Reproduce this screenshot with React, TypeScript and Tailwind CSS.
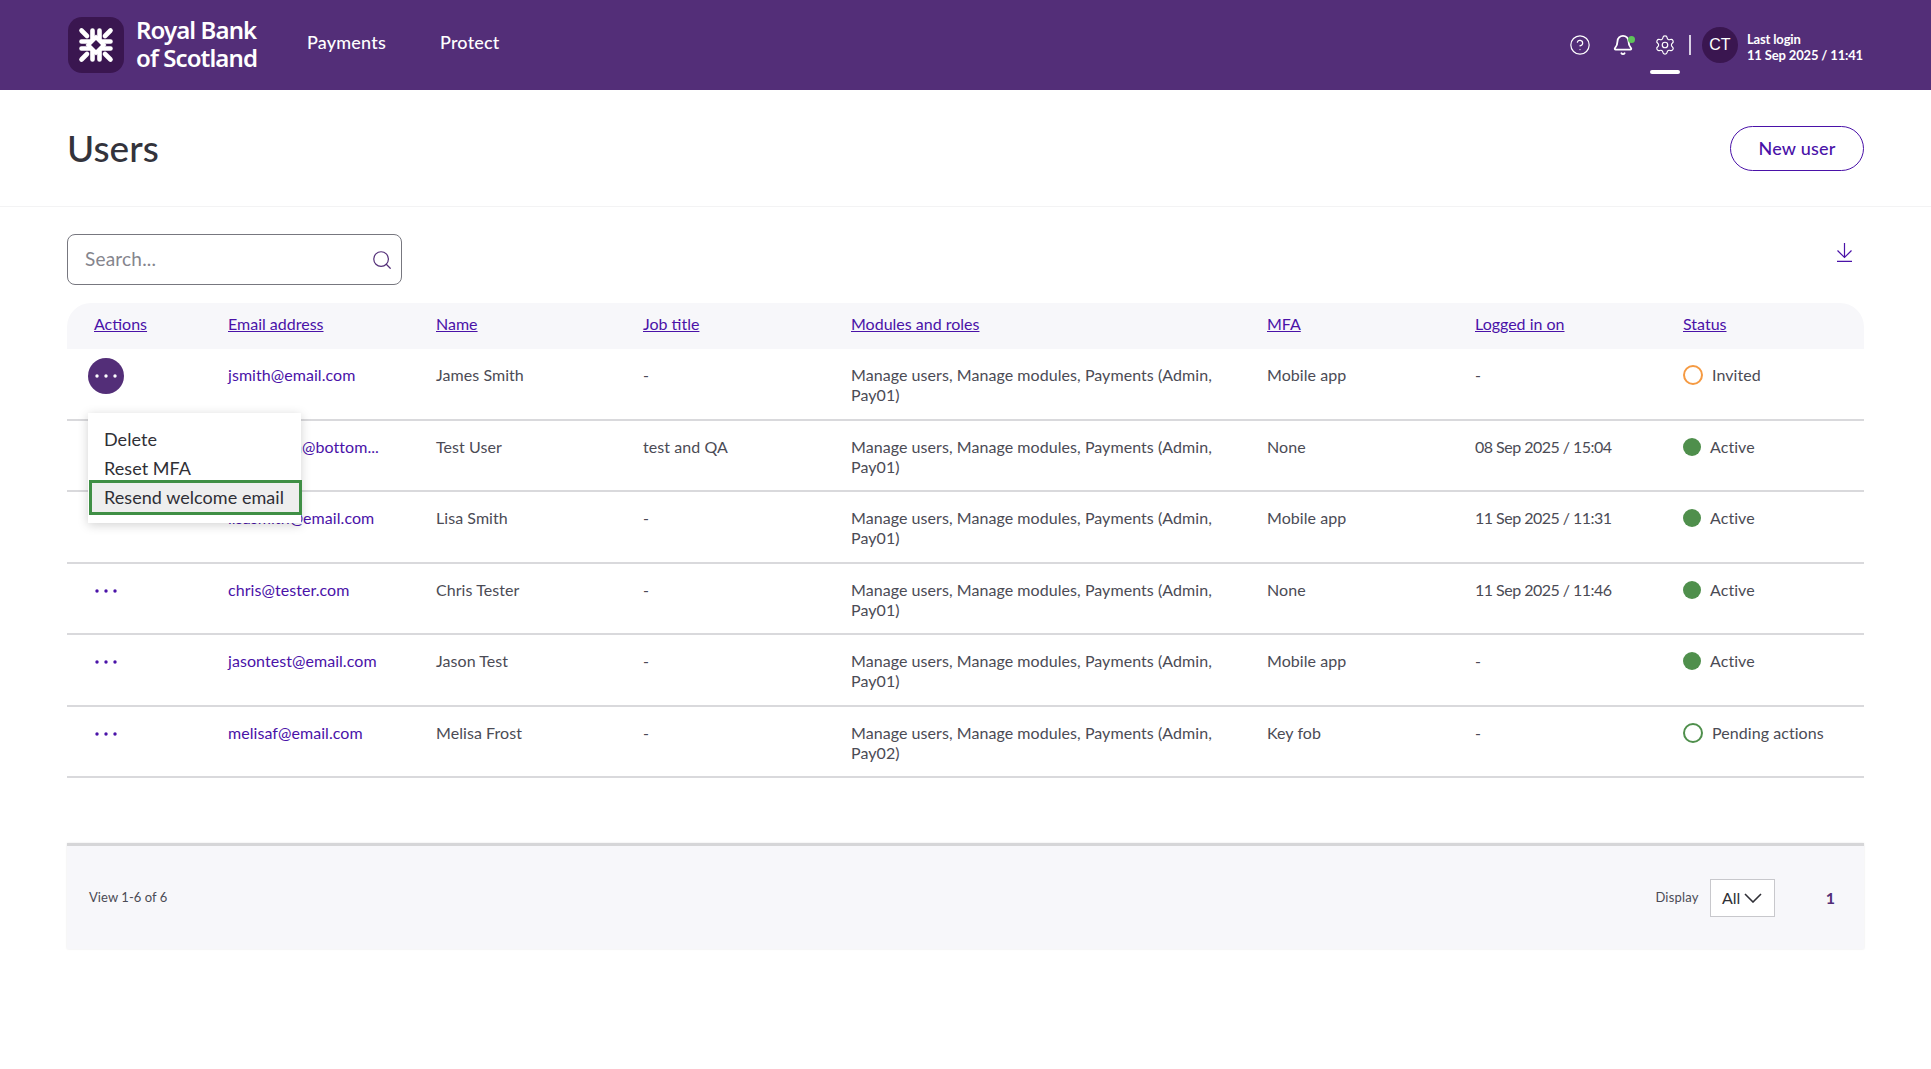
import { Bell, CircleHelp, Search, Settings } from "lucide-react";

type User = {
  email: string;
  name: string;
  job: string;
  roles: string;
  pay: string;
  mfa: string;
  login: string;
  status: "Invited" | "Active" | "Pending actions";
};

const users: User[] = [
  { email: "jsmith@email.com", name: "James Smith", job: "-", roles: "Manage users, Manage modules, Payments (Admin,", pay: "Pay01)", mfa: "Mobile app", login: "-", status: "Invited" },
  { email: "test.admin@bottom...", name: "Test User", job: "test and QA", roles: "Manage users, Manage modules, Payments (Admin,", pay: "Pay01)", mfa: "None", login: "08 Sep 2025 / 15:04", status: "Active" },
  { email: "lisasmith@email.com", name: "Lisa Smith", job: "-", roles: "Manage users, Manage modules, Payments (Admin,", pay: "Pay01)", mfa: "Mobile app", login: "11 Sep 2025 / 11:31", status: "Active" },
  { email: "chris@tester.com", name: "Chris Tester", job: "-", roles: "Manage users, Manage modules, Payments (Admin,", pay: "Pay01)", mfa: "None", login: "11 Sep 2025 / 11:46", status: "Active" },
  { email: "jasontest@email.com", name: "Jason Test", job: "-", roles: "Manage users, Manage modules, Payments (Admin,", pay: "Pay01)", mfa: "Mobile app", login: "-", status: "Active" },
  { email: "melisaf@email.com", name: "Melisa Frost", job: "-", roles: "Manage users, Manage modules, Payments (Admin,", pay: "Pay02)", mfa: "Key fob", login: "-", status: "Pending actions" },
];

const headers = ["Email address", "Name", "Job title", "Modules and roles", "MFA", "Logged in on", "Status"];

const gridCols = "grid grid-cols-[161px_208px_207px_208px_416px_208px_208px_181px]";

const Logo = () => (
  <div className="flex h-[56px] w-[56px] shrink-0 items-center justify-center rounded-[14px] bg-[#3a1650]">
    <svg width="36" height="36" viewBox="0 0 36 36" fill="none" stroke="#fff" strokeWidth="4.6" strokeLinecap="round">
      <path d="M18 7.5 L28.5 18 L18 28.5 L7.5 18 Z" fill="#fff" stroke="none" />
      {[0, 90, 180, 270].map((angle) => (
        <g key={angle} transform={`rotate(${angle} 18 18)`}>
          <path d="M3.5 3.5 L9 9" />
          <path d="M14.5 3.5 L14.5 13 M3.5 14.5 L13 14.5" />
        </g>
      ))}
      <path d="M18 13 L23 18 L18 23 L13 18 Z" fill="#3a1650" stroke="none" />
    </svg>
  </div>
);

const Dots = ({ color }: { color: string }) => (
  <svg width="22" height="4" viewBox="0 0 22 4" fill={color}>
    <circle cx="2" cy="2" r="1.7" />
    <circle cx="11" cy="2" r="1.7" />
    <circle cx="20" cy="2" r="1.7" />
  </svg>
);

const StatusCell = ({ status }: { status: User["status"] }) => {
  if (status === "Active") {
    return (
      <div className="flex items-center gap-[9px]">
        <span className="h-[18px] w-[18px] rounded-full bg-[#4f8f4c]" />
        <span>Active</span>
      </div>
    );
  }
  return (
    <div className="flex items-center gap-[9px]">
      <span className={`h-[20px] w-[20px] rounded-full border-2 ${status === "Invited" ? "border-[#f59a42]" : "border-[#4f8f4c]"}`} />
      <span>{status}</span>
    </div>
  );
};

const ActionMenu = () => (
  <div className="absolute left-[21px] top-[64px] z-10 w-[213px] bg-white pt-[12px] pb-[8px] text-[18px] leading-[29px] tracking-[0.05px] text-[#2f2f36] shadow-[0_2px_10px_rgba(0,0,0,0.18)]">
    <div className="pl-[16px]">Delete</div>
    <div className="pl-[16px]">Reset MFA</div>
    <div className="-mr-[1px] -mt-[3px] ml-[1px] box-border flex h-[35px] items-center border-[3px] border-[#3f8f45] bg-[#eeeeee] pl-[12px]">Resend welcome email</div>
  </div>
);

export default function App() {
  return (
    <div className="min-h-screen bg-white font-['Lato',sans-serif] text-[16px] tracking-[0.06px] text-[#4b4b55]">
      <header className="flex h-[90px] items-center bg-[#532e78] px-[68px] text-white">
        <Logo />
        <div className="ml-[12px] w-[124px] font-['Noto_Sans',sans-serif] text-[24px] font-semibold leading-[28px] tracking-[-0.9px] -translate-y-[1px]">
          <div>Royal Bank</div>
          <div>of Scotland</div>
        </div>
        <nav className="ml-[47px] flex gap-[54px] pb-[5px] text-[18px] font-medium tracking-[0.2px]">
          <span>Payments</span>
          <span>Protect</span>
        </nav>
        <div className="ml-auto flex items-center">
          <CircleHelp size={22} strokeWidth={1.3} />
          <div className="relative ml-[21px]">
            <Bell size={22} strokeWidth={2} />
            <span className="absolute right-[-1px] top-[2px] h-[7px] w-[7px] rounded-full bg-[#5fc35a]" />
          </div>
          <div className="relative ml-[20px]">
            <Settings size={22} strokeWidth={1.3} />
            <span className="absolute left-[-4px] top-[36px] h-[4px] w-[30px] rounded-full bg-white" />
          </div>
          <span className="ml-[13px] h-[20px] w-[1.5px] bg-[#d9d0e4]" />
          <span className="ml-[11px] flex h-[36px] w-[36px] items-center justify-center rounded-full bg-[#3a1650] font-['Liberation_Sans',sans-serif] text-[16px]">CT</span>
          <div className="ml-[9px] pt-[3px] text-[13px] font-bold leading-[16px] tracking-[-0.15px]">
            <div>Last login</div>
            <div>11 Sep 2025 / 11:41</div>
          </div>
        </div>
      </header>

      <div className="flex h-[117px] items-center justify-between border-b border-[#f3f3f4] px-[67px]">
        <h1 className="text-[37px] font-medium text-[#33333b]">Users</h1>
        <button className="flex h-[45px] w-[134px] items-center justify-center rounded-full border-[1.5px] border-[#4a12a8] text-[18px] font-medium tracking-[0.2px] text-[#4a12a8]">New user</button>
      </div>

      <main className="px-[67px] pt-[27px]">
        <div className="flex items-start justify-between">
          <div className="flex h-[51px] w-[335px] items-center justify-between rounded-[8px] border border-[#77777f] pl-[17px] pr-[8px]">
            <span className="text-[19px] tracking-[0.2px] text-[#85858d]">Search...</span>
            <Search size={22} strokeWidth={1.3} className="text-[#532e78]" />
          </div>
          <svg width="17" height="19" viewBox="0 0 17 19" fill="none" stroke="#4a12a8" strokeWidth="1.2" className="mr-[11px] mt-[9px]">
            <path d="M8.5 0 V14.5 M1.5 7.5 L8.5 14.5 L15.5 7.5 M1 18.4 H16" />
          </svg>
        </div>

        <div className="mt-[18px]">
          <div className={`${gridCols} h-[46px] items-center rounded-t-[24px] bg-[#f7f7fa] pb-[5px] tracking-normal text-[#4a12a8] underline`}>
            <span className="pl-[27px]">Actions</span>
            {headers.map((header) => (
              <span key={header}>{header}</span>
            ))}
          </div>
          {users.map((user, i) => (
            <div key={user.email} className={`${gridCols} h-[71.5px] border-b-2 border-[#d9d9dc] leading-[20px]`}>
              <div className="relative">
                {i === 0 ? (
                  <span className="ml-[21px] mt-[9px] flex h-[36px] w-[36px] items-center justify-center rounded-full bg-[#532e78]">
                    <Dots color="#fff" />
                  </span>
                ) : (
                  <span className="ml-[28px] mt-[25px] block">
                    <Dots color="#4a12a8" />
                  </span>
                )}
                {i === 0 && <ActionMenu />}
              </div>
              <span className="pt-[16px] text-[#4a12a8]">{user.email}</span>
              <span className="pt-[16px]">{user.name}</span>
              <span className="pt-[16px]">{user.job}</span>
              <span className="pt-[16px]">
                {user.roles}
                <br />
                {user.pay}
              </span>
              <span className="pt-[16px]">{user.mfa}</span>
              <span className="pt-[16px] tracking-[-0.52px]">{user.login}</span>
              <div className="pt-[16px]">
                <StatusCell status={user.status} />
              </div>
            </div>
          ))}
        </div>

        <footer className="mt-[65px] flex h-[106px] items-center justify-between border-t-[3px] border-[#d6d6d8] bg-[#f7f7fa] pl-[22px] pr-[29px] text-[13px] shadow-[0_0_2px_rgba(0,0,0,0.1)]">
          <span className="pt-[1px]">View 1-6 of 6</span>
          <div className="flex items-center">
            <span className="pt-[1px] tracking-[0.2px]">Display</span>
            <div className="ml-[11px] flex h-[38px] w-[65px] items-center justify-center gap-[4px] border border-[#c8c8cc] bg-white text-[16px] text-[#2f2f36]">
              All
              <svg width="18" height="10" viewBox="0 0 18 10" fill="none" stroke="#2f2f36" strokeWidth="1.6">
                <path d="M1 1 L9 9 L17 1" />
              </svg>
            </div>
            <span className="ml-[51px] text-[16px] font-bold text-[#532e78]">1</span>
          </div>
        </footer>
      </main>
    </div>
  );
}
